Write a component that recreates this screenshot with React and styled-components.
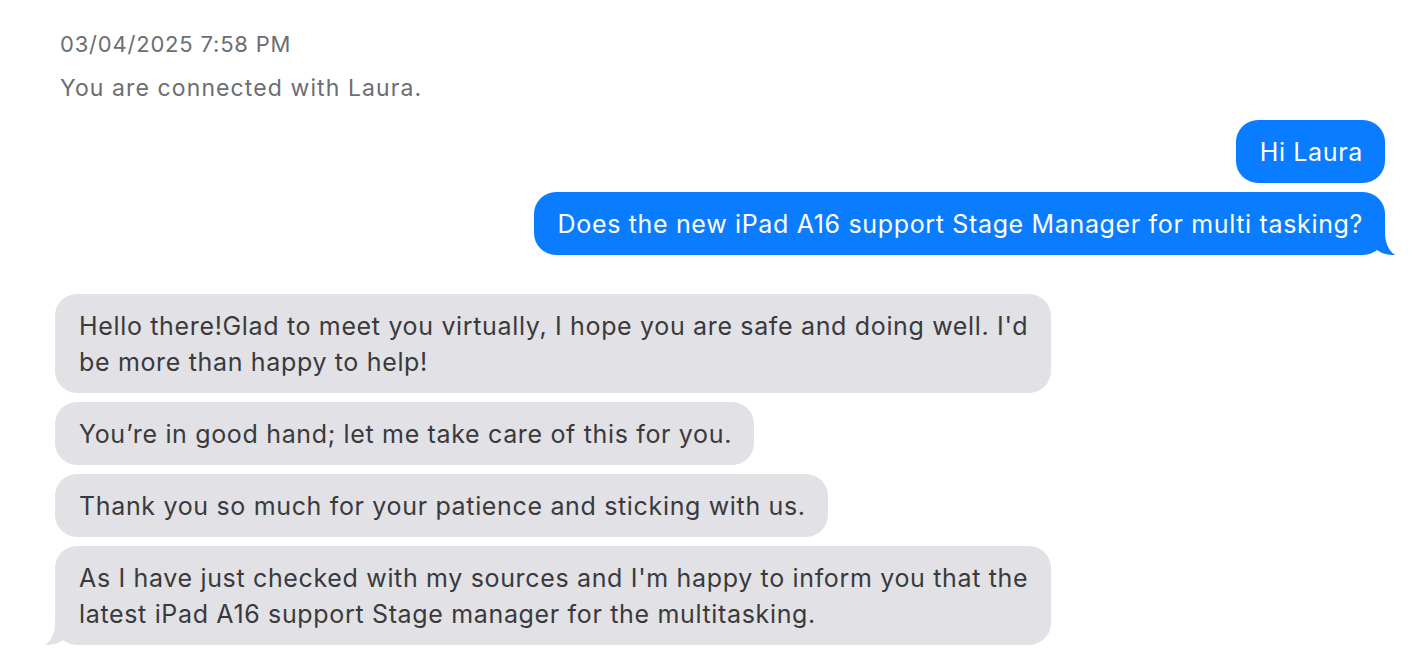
import React from 'react';
import styled, { createGlobalStyle } from 'styled-components';

const GlobalStyle = createGlobalStyle`
body {
  margin: 0;
  background: #ffffff;
  font-family: Inter, 'Noto Sans', 'Liberation Sans', sans-serif;
}
`;

const Page = styled.div`
  display: flex;
  flex-direction: column;
  padding: 30px 29px 20px 55px;
`;

const Meta = styled.div`
  color: #6d6d72;
  font-size: ${(p) => (p.big ? '23px' : '22px')};
  letter-spacing: ${(p) => (p.big ? '1.1px' : '0.8px')};
  line-height: 28px;
  padding-left: 5px;
  margin-bottom: ${(p) => (p.big ? '18px' : '16px')};
`;

const Group = styled.div`
  display: flex;
  flex-direction: column;
  align-items: ${(p) => (p.mine ? 'flex-end' : 'flex-start')};
  gap: 9px;
  margin-bottom: ${(p) => (p.mine ? '39px' : '0')};
`;

const Bubble = styled.div`
  position: relative;
  max-width: 950px;
  padding: 14px 22px 13px 24px;
  border-radius: 22px;
  font-size: 25px;
  line-height: 36px;
  letter-spacing: 0.66px;
  background: ${(p) => (p.mine ? '#0a7cff' : '#e1e1e6')};
  color: ${(p) => (p.mine ? '#ffffff' : '#3a3a3c')};
`;

const Tail = styled.svg`
  position: absolute;
  bottom: 0;
  width: 22px;
  height: 24px;
  ${(p) => (p.mine ? 'right: -10px;' : 'left: -10px; transform: scaleX(-1);')}
`;

function BubbleTail({ mine }) {
  const fill = mine ? '#0a7cff' : '#e1e1e6';
  return (
    <Tail mine={mine} viewBox="0 0 22 24">
      <path d="M0 0 L12 0 C12 10 14 18 22 24 C14 24 8 22 4 19 C2 20 1 21 0 21 Z" fill={fill} />
    </Tail>
  );
}

const mine = ['Hi Laura', 'Does the new iPad A16 support Stage Manager for multi tasking?'];
const theirs = [
  "Hello there!Glad to meet you virtually, I hope you are safe and doing well. I'd be more than happy to help!",
  'You’re in good hand; let me take care of this for you.',
  'Thank you so much for your patience and sticking with us.',
  "As I have just checked with my sources and I'm happy to inform you that the latest iPad A16 support Stage manager for the multitasking.",
];

export default function App() {
  return (
    <>
      <GlobalStyle />
      <Page>
        <Meta>03/04/2025 7:58 PM</Meta>
        <Meta big>You are connected with Laura.</Meta>
        <Group mine>
          {mine.map((t, i) => (
            <Bubble mine key={t}>
              {t}
              {i === mine.length - 1 && <BubbleTail mine />}
            </Bubble>
          ))}
        </Group>
        <Group>
          {theirs.map((t, i) => (
            <Bubble key={t}>
              {t}
              {i === theirs.length - 1 && <BubbleTail />}
            </Bubble>
          ))}
        </Group>
      </Page>
    </>
  );
}
